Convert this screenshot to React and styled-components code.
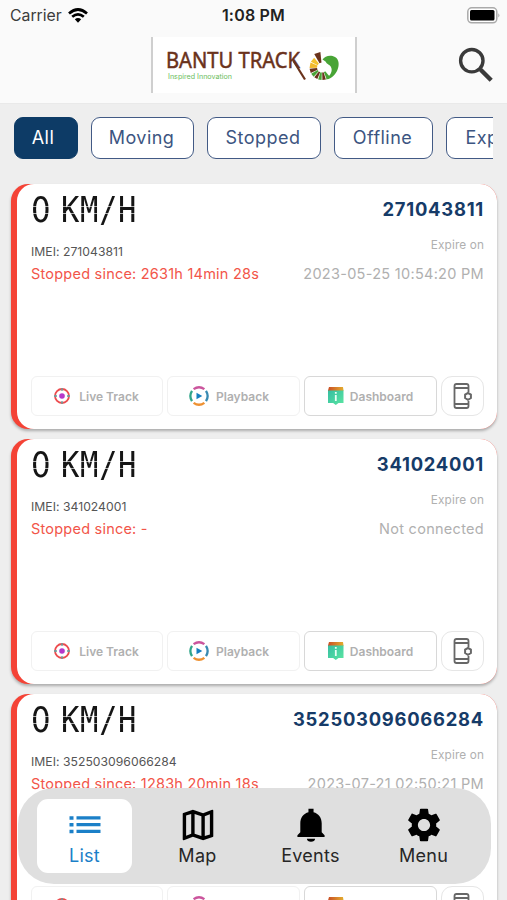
import React from "react";
import styled, { createGlobalStyle } from "styled-components";

const navy = "#0d3b66";
const red = "#f44336";

const Global = createGlobalStyle`
  * { box-sizing: border-box; }
  body { margin: 0; background: #eee; font-family: Inter, "Liberation Sans", sans-serif; }
  button { font: inherit; padding: 0; margin: 0; }
`;

const Screen = styled.div`
  position: relative;
  width: 507px;
  height: 900px;
  overflow: hidden;
  background: #eee;
`;

const Header = styled.header`
  height: 104px;
  background: #fafafa;
  border-bottom: 1px solid #e9e9e9;
`;

const StatusBar = styled.div`
  height: 30px;
  display: grid;
  grid-template-columns: 1fr auto 1fr;
  align-items: center;
  padding: 0 7px 0 10px;
  color: #222;
`;

const Carrier = styled.div`
  display: flex;
  align-items: center;
  gap: 6px;
  font-size: 15.8px;
  color: #3c3c3c;
`;

const Clock = styled.div`
  font-size: 16px;
  font-weight: 600;
  letter-spacing: 0.2px;
  margin-right: 3px;
`;

const Battery = styled.svg`
  justify-self: end;
  display: block;
`;

const TitleBar = styled.div`
  height: 70px;
  display: grid;
  grid-template-columns: 1fr 206px 1fr;
  align-items: center;
  padding: 0 13px 0 14px;
`;

const LogoFrame = styled.div`
  height: 56px;
  background: #fff;
  border: solid #cfcfcf;
  border-width: 0 2px;
`;

const IconButton = styled.button`
  justify-self: end;
  width: 36px;
  height: 36px;
  border: 0;
  background: none;
`;

const Filters = styled.nav`
  display: flex;
  gap: 13px;
  margin: 13px 14px 0;
  overflow: hidden;
`;

const Chip = styled.button`
  flex: 0 0 ${(p) => p.$width}px;
  height: 42px;
  border: 1.5px solid ${(p) => (p.$active ? navy : "#425a85")};
  border-radius: 9px;
  background: ${(p) => (p.$active ? navy : "#fff")};
  color: ${(p) => (p.$active ? "#fff" : "#3c5581")};
  font-size: 18px;
  letter-spacing: 0.45px;
  padding: 0 ${(p) => (p.$active ? 6 : 2)}px 2px 0;
`;

const Cards = styled.main`
  display: flex;
  flex-direction: column;
  gap: 10px;
  padding: 25px 10px 0 11px;
`;

const CardShell = styled.article`
  flex: 0 0 245px;
  border-radius: 17px;
  background: ${red};
  padding-left: 6px;
  box-shadow: 0 2px 3px rgba(0, 0, 0, 0.28);
`;

const CardBody = styled.div`
  height: 245px;
  border-radius: 17px;
  background: #fff;
  padding: 11px 14px 13px;
  display: flex;
  flex-direction: column;
`;

const Row = styled.div`
  height: ${(p) => p.$height}px;
  display: flex;
  justify-content: space-between;
  align-items: center;
  white-space: nowrap;
`;

const Speed = styled.div`
  display: flex;
  height: 30px;
  font: 35px/30px "DejaVu Sans Mono", monospace;
  color: #151515;
  mask-image: linear-gradient(#000 11px, rgba(0, 0, 0, 0.35) 11px, rgba(0, 0, 0, 0.35) 12px, #000 12px, #000 18px, rgba(0, 0, 0, 0.35) 18px, rgba(0, 0, 0, 0.35) 19px, #000 19px);
`;

const Digit = styled.span`
  width: 29.5px;
  font-family: "DejaVu Sans", sans-serif;
  transform: scaleX(0.88);
  transform-origin: left;
`;

const UnitChar = styled.span`
  width: 19.2px;
  transform: scaleX(0.87);
  transform-origin: left;
`;

const DeviceId = styled.div`
  font-size: 18.4px;
  font-weight: 700;
  letter-spacing: 0.75px;
  color: #163b68;
  padding-bottom: 3px;
  margin-right: -1px;
`;

const Imei = styled.div`
  font-size: 12.2px;
  letter-spacing: 0.02px;
  color: #555;
  padding-top: 14px;
`;

const ExpireLabel = styled.div`
  font-size: 11.8px;
  letter-spacing: 0.12px;
  color: #b0b0b0;
  padding-top: 1px;
  margin-right: -1px;
`;

const Status = styled.div`
  font-size: 14.5px;
  letter-spacing: 0.22px;
  color: #f25549;
`;

const Expiry = styled.div`
  font-size: 14.5px;
  letter-spacing: 0.29px;
  color: #b0b0b0;
  margin-right: -1px;
`;

const Actions = styled.div`
  margin-top: auto;
  display: grid;
  grid-template-columns: 132px 133px 133px 43px;
  gap: 4px;
  height: 40px;
  margin-right: -1px;
`;

const Action = styled.button`
  display: flex;
  align-items: center;
  justify-content: center;
  gap: ${(p) => p.$gap ?? 7}px;
  height: 40px;
  border: 1.4px solid ${(p) => p.$line || "#f1f1f1"};
  border-radius: ${(p) => p.$radius || 6}px;
  background: #fff;
  color: #b0b0b0;
  font-size: 12px;
  font-weight: 600;
  padding-right: ${(p) => p.$shift || 0}px;
  white-space: nowrap;
`;

const TabBar = styled.nav`
  position: absolute;
  left: 18px;
  top: 788px;
  width: 473px;
  height: 96px;
  border-radius: 36px;
  background: #dfdfdf;
  display: grid;
  grid-template-columns: repeat(4, 95px);
  column-gap: 18px;
  padding: 11px 19px;
`;

const Tab = styled.button`
  height: 74px;
  border: 0;
  border-radius: 11px;
  background: ${(p) => (p.$active ? "#fff" : "transparent")};
  color: ${(p) => (p.$active ? "#1b80c8" : "#262626")};
  display: flex;
  flex-direction: column;
  align-items: center;
  padding-top: 8px;
  gap: 1px;
  font-size: 18px;
  line-height: 24px;
  letter-spacing: 0.3px;
`;

const WifiIcon = () => (
  <svg width="20" height="15" viewBox="0 0 20 15">
    <g fill="none" stroke="#000" strokeWidth="2.7">
      <path d="M1 5.5Q10-2.5 19 5.5" />
      <path d="M4.2 8.8Q10 3.8 15.8 8.8" />
    </g>
    <path d="M6.8 11.3Q10 8.8 13.2 11.3L10 14.7Z" />
  </svg>
);

const BatteryIcon = () => (
  <Battery width="33" height="17" viewBox="0 0 33 17">
    <rect x="0.8" y="0.8" width="29" height="15" rx="4" fill="#fff" stroke="#aaa" strokeWidth="1.5" />
    <rect x="3" y="3" width="24.5" height="10.5" rx="1.5" />
    <path d="M31.3 6.2q2.2 2.2 0 4.4z" fill="#aaa" />
  </Battery>
);

const SearchIcon = () => (
  <svg width="36" height="36" viewBox="0 0 36 36" fill="none" stroke="#3a3a3a">
    <circle cx="13.8" cy="13.7" r="11.2" strokeWidth="3.4" />
    <path d="M22.7 22.7L33.2 33.2" strokeWidth="4.4" />
    <path d="M21 21L26 26" strokeWidth="2.8" />
  </svg>
);

const petals = [
  [178, 203, "#f2b92c"], [207, 231, "#f4c22e"], [240, 264, "#6a321b"],
  [154, 174, "#6a321b"], [132, 150, "#48a436"], [112, 128, "#6a321b"],
  [92, 108, "#48a436"], [72, 88, "#6a321b"], [50, 68, "#48a436"],
];
const polar = (r, a) => {
  const t = (a * Math.PI) / 180;
  return `${169 + r * Math.cos(t)} ${30.5 + r * Math.sin(t)}`;
};

const Logo = () => (
  <svg width="202" height="56" viewBox="0 0 202 56">
    <text x="13" y="30.5" fontFamily="Noto Sans, Open Sans, sans-serif" fontSize="22" fill="#6a321b" stroke="#6a321b" strokeWidth="0.5" textLength="134" lengthAdjust="spacingAndGlyphs">BANTU TRACK</text>
    <path d="M140.5 24L152 42.5" stroke="#6a321b" strokeWidth="2.2" />
    <text x="15" y="42.3" fontFamily="Inter, sans-serif" fontSize="7" fill="#6bbd5d" textLength="64" lengthAdjust="spacingAndGlyphs">Inspired Innovation</text>
    {petals.map(([a, b, color]) => {
      const outer = a === 240 ? 15.5 : 12.5;
      return <path key={a} fill={color} d={`M${polar(5, a)}L${polar(outer, a)}L${polar(outer, b)}L${polar(5, b)}Z`} />;
    })}
    <path d="M169.5 22.5C172 18.5 178 17.5 182 20C186.5 22.5 186.5 29 184 34C181.5 39 176.5 42.5 172.5 42.5C176 39.5 179.5 35.5 178.5 31.5C177.5 27 174 28 172.5 24.5Z" fill="#48a436" />
  </svg>
);

const TargetIcon = () => (
  <svg width="18" height="18" viewBox="0 0 18 18" fill="none">
    <circle cx="9" cy="9" r="7" stroke="#ed4b4e" strokeWidth="1.8" />
    <path d="M9 1.2v2.6M9 14.2v2.6M1.2 9h2.6M14.2 9h2.6" stroke="#719b9b" strokeWidth="1.8" />
    <circle cx="9" cy="9" r="2.8" fill="#b638ca" />
  </svg>
);

const PlaybackIcon = () => (
  <svg width="20" height="20" viewBox="0 0 20 20" fill="none" strokeWidth="2.3">
    <path d="M4.6 3.2Q10-.8 15.4 3.2" stroke="#cb559d" />
    <path d="M17 4.8Q20.3 10 17 15.2" stroke="#388ab2" />
    <path d="M15.4 16.8Q10 20.8 4.6 16.8" stroke="#ee9132" />
    <path d="M3 15.2Q-.3 10 3 4.8" stroke="#31a58a" />
    <path d="M7.5 6.7v6.6l5.8-3.3z" fill="#167fc0" />
  </svg>
);

const DashboardIcon = () => (
  <svg width="16" height="18" viewBox="0 0 16 18">
    <defs>
      <linearGradient id="ribbon">
        <stop stopColor="#c94d25" />
        <stop offset="1" stopColor="#e3ad2f" />
      </linearGradient>
      <linearGradient id="panel" x2="1" y2="1">
        <stop stopColor="#35bda2" />
        <stop offset="1" stopColor="#5be6a2" />
      </linearGradient>
    </defs>
    <path d="M0 3h15.5v13h-5l-2.7 2-2.7-2H0z" fill="url(#panel)" />
    <path d="M1 0h14l.5 3.4H0z" fill="url(#ribbon)" />
    <path d="M7.8 5v1.8M7.8 8v6" stroke="#eafff5" strokeWidth="1.8" fill="none" />
  </svg>
);

const DeviceIcon = () => (
  <svg width="20" height="26" viewBox="0 0 20 26" fill="none" stroke="#676767" strokeWidth="1.8">
    <path d="M15.5 9V3q0-2-2-2h-10q-2 0-2 2v20q0 2 2 2h10q2 0 2-2v-5M1.5 5h14M1.5 21h14" />
    <path d="M15 10l2.9 1.6v3.4L15 16.8l-2.9-1.8v-3.4z" strokeWidth="2" />
  </svg>
);

const ListIcon = () => (
  <svg width="36" height="36" viewBox="0 0 36 36" fill="currentColor">
    <path d="M2.5 9.3h4v3.5h-4zM2.5 16h4v3.5h-4zM2.5 22.7h4v3.5h-4zM9.5 9.3h24v3.3h-24zM9.5 16h24v3.3h-24zM9.5 22.7h24v3.3h-24z" />
  </svg>
);

const MapIcon = () => (
  <svg width="36" height="36" viewBox="1.4 1.4 21.2 21.2" fill="#000">
    <path d="M20.5 3l-.16.03L15 5.1 9 3 3.36 4.9c-.21.07-.36.25-.36.48V20.5c0 .28.22.5.5.5l.16-.03L9 18.9l6 2.1 5.64-1.9c.21-.07.36-.25.36-.48V3.5c0-.28-.22-.5-.5-.5zM10 5.47l4 1.4v11.66l-4-1.4V5.47zm-5 .99l3-1.01v11.7l-3 1.16V6.46zm14 11.08l-3 1.01V6.86l3-1.16v11.84z" />
  </svg>
);

const BellIcon = () => (
  <svg width="36" height="36" viewBox="1.4 1.4 21.2 21.2" fill="#000">
    <path d="M9.6 20.1h4.8c0 1.1-1 1.7-2.4 1.7s-2.4-.6-2.4-1.7zM18.3 16.3V11c0-3.4-2-5.8-4.8-6.5V2.4h-3v2.1C7.7 5.2 5.7 7.6 5.7 11v5.3L4 18v1h16v-1z" />
  </svg>
);

const GearIcon = () => (
  <svg width="36" height="36" viewBox="1.4 1.4 21.2 21.2" fill="#000">
    <path d="M19.14 12.94c.04-.3.06-.61.06-.94 0-.32-.02-.64-.07-.94l2.03-1.58c.18-.14.23-.41.12-.61l-1.92-3.32c-.12-.22-.37-.29-.59-.22l-2.39.96c-.5-.38-1.03-.7-1.62-.94l-.36-2.54c-.04-.24-.24-.41-.48-.41h-3.84c-.24 0-.43.17-.47.41l-.36 2.54c-.59.24-1.13.57-1.62.94l-2.39-.96c-.22-.08-.47 0-.59.22L2.74 8.87c-.12.21-.08.47.12.61l2.03 1.58c-.05.3-.09.63-.09.94s.02.64.07.94l-2.03 1.58c-.18.14-.23.41-.12.61l1.92 3.32c.12.22.37.29.59.22l2.39-.96c.5.38 1.03.7 1.62.94l.36 2.54c.05.24.24.41.48.41h3.84c.24 0 .44-.17.47-.41l.36-2.54c.59-.24 1.13-.56 1.62-.94l2.39.96c.22.08.47 0 .59-.22l1.92-3.32c.12-.22.07-.47-.12-.61l-2.01-1.58zM12 15.6c-1.98 0-3.6-1.62-3.6-3.6s1.62-3.6 3.6-3.6 3.6 1.62 3.6 3.6-1.62 3.6-3.6 3.6z" />
  </svg>
);

const filters = [["All", 64], ["Moving", 103], ["Stopped", 114], ["Offline", 99], ["Expired", 108]];

const devices = [
  { id: "271043811", status: "Stopped since: 2631h 14min 28s", expiry: "2023-05-25 10:54:20 PM" },
  { id: "341024001", status: "Stopped since: -", expiry: "Not connected" },
  { id: "352503096066284", status: "Stopped since: 1283h 20min 18s", expiry: "2023-07-21 02:50:21 PM" },
];

const tabs = [["List", ListIcon], ["Map", MapIcon], ["Events", BellIcon], ["Menu", GearIcon]];

function DeviceCard({ id, status, expiry }) {
  return (
    <CardShell>
      <CardBody>
        <Row $height={30}>
          <Speed>
            <Digit>0</Digit>
            {[..."KM/H"].map((char) => <UnitChar key={char}>{char}</UnitChar>)}
          </Speed>
          <DeviceId>{id}</DeviceId>
        </Row>
        <Row $height={38}>
          <Imei>IMEI: {id}</Imei>
          <ExpireLabel>Expire on</ExpireLabel>
        </Row>
        <Row $height={21}>
          <Status>{status}</Status>
          <Expiry>{expiry}</Expiry>
        </Row>
        <Actions>
          <Action $gap={8} $shift={2}><TargetIcon />Live Track</Action>
          <Action $shift={9}><PlaybackIcon />Playback</Action>
          <Action $gap={6} $line="#d8d8d8"><DashboardIcon />Dashboard</Action>
          <Action $line="#e6e6e6" $radius={11} aria-label="Device settings"><DeviceIcon /></Action>
        </Actions>
      </CardBody>
    </CardShell>
  );
}

export default function App() {
  return (
    <Screen>
      <Global />
      <Header>
        <StatusBar>
          <Carrier>Carrier<WifiIcon /></Carrier>
          <Clock>1:08 PM</Clock>
          <BatteryIcon />
        </StatusBar>
        <TitleBar>
          <span />
          <LogoFrame><Logo /></LogoFrame>
          <IconButton aria-label="Search"><SearchIcon /></IconButton>
        </TitleBar>
      </Header>
      <Filters>
        {filters.map(([label, width], i) => (
          <Chip key={label} $width={width} $active={i === 0}>{label}</Chip>
        ))}
      </Filters>
      <Cards>
        {devices.map((device) => <DeviceCard key={device.id} {...device} />)}
      </Cards>
      <TabBar>
        {tabs.map(([label, Icon], i) => (
          <Tab key={label} $active={i === 0}><Icon />{label}</Tab>
        ))}
      </TabBar>
    </Screen>
  );
}
